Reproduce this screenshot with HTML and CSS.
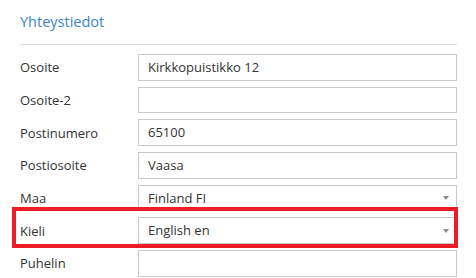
FILE: index.html
```html
<!DOCTYPE html>
<html lang="fi">
<head>
<meta charset="utf-8">
<link rel="stylesheet" href="styles.css">
</head>
<body>
<section class="panel">
  <h2 class="title">Yhteystiedot</h2>
  <div class="rows">
    <div class="row"><span class="label">Osoite</span><div class="field">Kirkkopuistikko 12</div></div>
    <div class="row"><span class="label">Osoite-2</span><div class="field"></div></div>
    <div class="row"><span class="label">Postinumero</span><div class="field">65100</div></div>
    <div class="row"><span class="label">Postiosoite</span><div class="field">Vaasa</div></div>
    <div class="row"><span class="label">Maa</span><div class="field select">Finland FI<span class="caret"></span></div></div>
    <div class="row highlighted"><span class="label">Kieli</span><div class="field select">English en<span class="caret"></span></div></div>
    <div class="row"><span class="label">Puhelin</span><div class="field"></div></div>
  </div>
</section>
</body>
</html>
```
FILE: styles.css
```css
html, body {
  margin: 0;
  padding: 0;
  background: #fff;
}
body {
  font-family: "Open Sans", "Noto Sans", sans-serif;
  color: #333;
  overflow: hidden;
}
.panel {
  padding: 12px 19px 0 20px;
}
.title {
  margin: 0;
  font-size: 14.5px;
  line-height: 20px;
  font-weight: 400;
  color: #3b86c8;
  padding-bottom: 12px;
  border-bottom: 1px solid #dadada;
}
.rows {
  display: flex;
  flex-direction: column;
  gap: 6px;
  padding-top: 9px;
}
.row {
  position: relative;
  display: grid;
  grid-template-columns: 118px 1fr;
  align-items: center;
}
.label {
  font-size: 13px;
  line-height: 18px;
  color: #333;
}
.field {
  position: relative;
  box-sizing: border-box;
  height: 26.7px;
  border: 1px solid #c8c8c8;
  padding: 0 9px;
  font-size: 13px;
  line-height: 24.7px;
  color: #333;
}
.select .caret {
  position: absolute;
  right: 7px;
  top: 50%;
  margin-top: -2px;
  width: 0;
  height: 0;
  border-left: 3.5px solid transparent;
  border-right: 3.5px solid transparent;
  border-top: 4px solid #8a8a8a;
}
.highlighted::after {
  content: "";
  position: absolute;
  left: -8px;
  right: -1px;
  top: -10px;
  bottom: -3.5px;
  border: 4.5px solid #ec1c24;
  pointer-events: none;
}
```
